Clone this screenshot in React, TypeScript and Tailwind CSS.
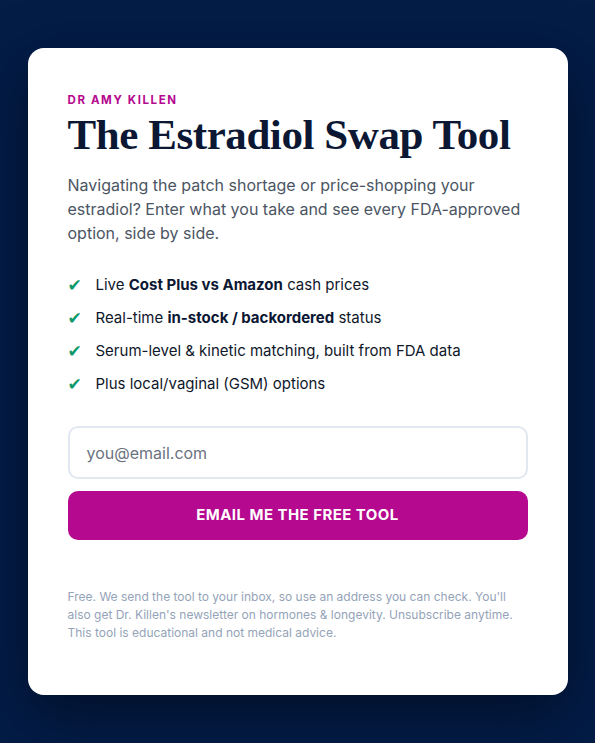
import React from "react";

const items: React.ReactNode[] = [
  <>Live <b className="font-bold text-[#0b1733]">Cost Plus vs Amazon</b> cash prices</>,
  <>Real-time <b className="font-bold text-[#0b1733]">in-stock / backordered</b> status</>,
  <>Serum-level &amp; kinetic matching, built from FDA data</>,
  <>Plus local/vaginal (GSM) options</>,
];

export default function App() {
  return (
    <div
      className="min-h-[743px] w-full bg-[#031d47] flex justify-center pt-[48px] pb-[48px]"
      style={{ fontFamily: "Inter, 'Noto Sans', sans-serif" }}
    >
      <div className="w-[540px] h-[647px] bg-white rounded-[16px] shadow-[0_20px_60px_rgba(2,10,30,0.7)] px-[40px] pt-[45px]">
        <div className="text-[11.5px] font-bold tracking-[0.14em] text-[#b5098f] leading-[14px]">
          DR AMY KILLEN
        </div>
        <h1
          className="mt-[4px] text-[43px] leading-[48px] font-bold text-[#0b1733] tracking-[-0.01em]"
          style={{ fontFamily: "'Liberation Serif', 'DejaVu Serif', serif" }}
        >
          The Estradiol Swap Tool
        </h1>
        <p className="mt-[14px] text-[16px] leading-[24px] text-[#4b5563]">
          Navigating the patch shortage or price-shopping your estradiol? Enter what you take and see every FDA-approved option, side by side.
        </p>
        <ul className="mt-[29px] flex flex-col gap-[11px]">
          {items.map((it, i) => (
            <li key={i} className="flex items-center h-[22px] text-[15px] text-[#0f172a]">
              <span
                className="w-[28px] text-[#0c9a6c] text-[17px] leading-none"
                style={{ fontFamily: "'DejaVu Sans', sans-serif" }}
              >
                ✔
              </span>
              <span>{it}</span>
            </li>
          ))}
        </ul>
        <div className="mt-[31px] h-[53px] border-2 border-[#e2e8f0] rounded-[10px] flex items-center px-[17px]">
          <span className="text-[16px] text-[#6b7280]">you@email.com</span>
        </div>
        <button className="mt-[12px] w-full h-[49px] rounded-[10px] bg-[#b5098f] text-white text-[15px] font-bold tracking-[0.03em]">
          EMAIL ME THE FREE TOOL
        </button>
        <p className="mt-[48px] text-[12px] leading-[18px] text-[#94a3b8]">
          Free. We send the tool to your inbox, so use an address you can check. You'll also get Dr. Killen's newsletter on hormones &amp; longevity. Unsubscribe anytime. This tool is educational and not medical advice.
        </p>
      </div>
    </div>
  );
}
